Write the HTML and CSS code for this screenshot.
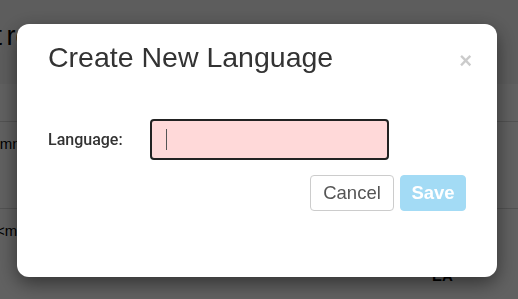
FILE: index.html
```html
<!DOCTYPE html>
<html lang="en">
<head>
<meta charset="utf-8">
<title>Create New Language</title>
<link rel="stylesheet" href="styles.css">
</head>
<body>
  <div class="page">
    <h2 class="page-title">Not required</h2>
    <div class="page-row row-first">Column</div>
    <div class="page-row row-second">&lt;missing&gt;</div>
    <div class="page-foot">EA</div>
  </div>
  <div class="backdrop"></div>
  <div class="modal">
    <div class="modal-header">
      <h3 class="modal-title">Create New Language</h3>
      <span class="close">&times;</span>
    </div>
    <div class="modal-body">
      <label class="field-label">Language:</label>
      <div class="field-input"><span class="caret"></span></div>
    </div>
    <div class="modal-footer">
      <button class="btn btn-cancel">Cancel</button>
      <button class="btn btn-save">Save</button>
    </div>
  </div>
</body>
</html>
```

FILE: styles.css
```css
html, body {
  margin: 0;
  padding: 0;
  width: 518px;
  height: 299px;
  overflow: hidden;
  font-family: "Liberation Sans", Arial, sans-serif;
  background: #fff;
}

.page {
  color: #000;
}

.page-title {
  margin: 0;
  padding: 21px 0 0 0;
  margin-left: -40px;
  font-size: 27px;
  font-weight: normal;
  line-height: 30px;
  height: 63px;
  background: #f5f5f5;
  border-bottom: 1px solid #fff;
  word-spacing: -3px;
}

.page-row {
  border-top: 1px solid #d8d8d8;
  height: 87px;
  box-sizing: border-box;
  padding-top: 12px;
  font-size: 15px;
  line-height: 20px;
}

.row-first {
  margin-top: 36px;
  padding-left: 0;
  text-indent: -31px;
}

.row-second {
  text-indent: -4px;
}

.page-foot {
  padding-left: 432px;
  font-size: 15px;
  font-weight: bold;
  line-height: 18px;
  margin-top: -28px;
}

.backdrop {
  position: fixed;
  inset: 0;
  background: rgba(0, 0, 0, 0.62);
}

.modal {
  position: fixed;
  left: 17px;
  top: 24px;
  width: 480px;
  height: 253px;
  box-sizing: border-box;
  background: #fff;
  border-radius: 12px;
  box-shadow: 0 6px 20px rgba(0, 0, 0, 0.5);
  padding: 17px 28px 0 31px;
  display: flex;
  flex-direction: column;
}

.modal-header {
  display: flex;
  justify-content: space-between;
  align-items: flex-start;
}

.modal-title {
  margin: 0;
  font-size: 28.5px;
  font-weight: normal;
  line-height: 32px;
  color: #333;
}

.close {
  font-size: 22px;
  font-weight: bold;
  line-height: 22px;
  color: #000;
  opacity: 0.2;
  margin-top: 9px;
  margin-right: -3px;
}

.modal-body {
  display: flex;
  align-items: center;
  margin-top: 46px;
}

.field-label {
  width: 102px;
  font-family: Roboto, "Liberation Sans", sans-serif;
  font-weight: 500;
  font-size: 16px;
  color: #333;
}

.field-input {
  width: 239px;
  height: 41px;
  box-sizing: border-box;
  border: 2px solid #222;
  border-radius: 4px;
  background: #ffd9d9;
  display: flex;
  align-items: center;
  padding-left: 14px;
}

.caret {
  width: 1px;
  height: 21px;
  background: #555;
}

.modal-footer {
  display: flex;
  justify-content: flex-end;
  gap: 6px;
  margin-top: 15px;
  padding-right: 3px;
}

.btn {
  height: 36px;
  box-sizing: border-box;
  border-radius: 4px;
  font-family: "Liberation Sans", Arial, sans-serif;
  font-size: 18.5px;
  padding: 0;
}

.btn-cancel {
  width: 84px;
  background: #fff;
  border: 1px solid #ccc;
  color: #555;
}

.btn-save {
  width: 66px;
  background: #a3dbf5;
  border: 1px solid #a3dbf5;
  color: #fff;
  font-weight: bold;
}
```
